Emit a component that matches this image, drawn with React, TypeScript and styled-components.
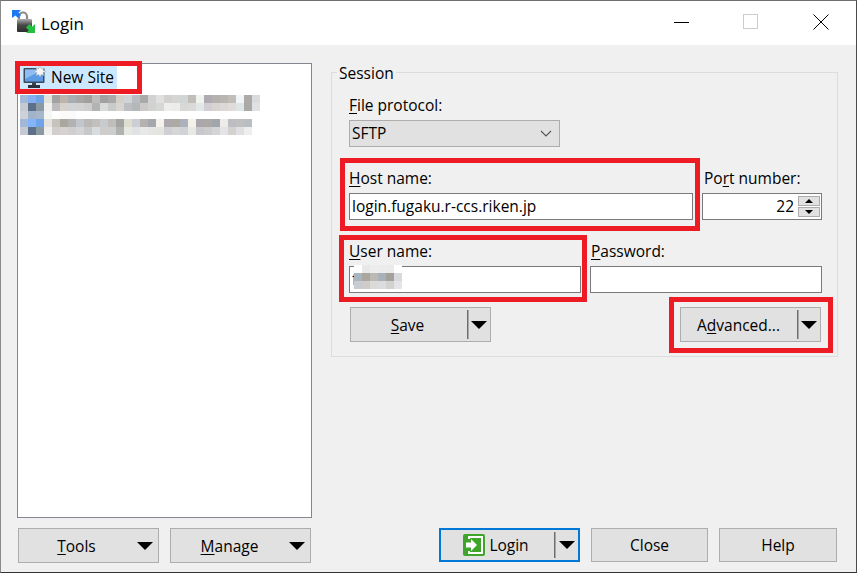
import React from "react";
import styled, { createGlobalStyle } from "styled-components";

const Global = createGlobalStyle`
  html, body { margin: 0; padding: 0; background: #f0f0f0; }
  body { font-family: "Open Sans", "Noto Sans", "Liberation Sans", sans-serif; font-size: 15.5px; color: #000; }
  * { box-sizing: border-box; }
`;

const Win = styled.div`
  position: relative;
  width: 857px;
  height: 573px;
  display: flex;
  flex-direction: column;
  background: #f0f0f0;
  overflow: hidden;
  border-top: 1px solid #6f6f6f;
  border-left: 1px solid #8a8a8a;
  border-right: 1px solid #4a4a4a;
  border-bottom: 1px solid #333;
`;
const TitleBar = styled.div`
  height: 44px;
  flex: none;
  background: #fff;
  display: flex;
  align-items: center;
  padding: 0 0 2px 11px;
`;
const Title = styled.span`
  margin: 4px 0 0 5px;
  font-size: 17px;
  line-height: 38px;
`;
const WinButtons = styled.div`
  margin-left: auto;
  display: flex;
  align-items: center;
  gap: 54px;
  padding-right: 27px;
`;
const Main = styled.div`
  flex: 1;
  display: flex;
  padding: 18px 0 9px 16px;
  gap: 19px;
`;
const LeftCol = styled.div`
  width: 295px;
  display: flex;
  flex-direction: column;
`;
const Tree = styled.div`
  height: 455px;
  background: #fff;
  border: 1px solid #828790;
  padding: 2px;
`;
const SelRow = styled.div`
  width: 97px;
  height: 24px;
  background: #cce8ff;
  display: flex;
  align-items: center;
  padding: 0 0 2px 3px;
  gap: 4px;
  line-height: 22px;
  white-space: nowrap;
`;
const TreeMosaic = styled.div`
  margin-top: 5px;
  line-height: 0;
`;
const LeftButtons = styled.div`
  display: flex;
  gap: 11px;
  margin-top: 10px;
  padding-left: 1px;
`;
const Btn = styled.div<{ $w: number; $h?: number; $focus?: boolean }>`
  position: relative;
  width: ${(p) => p.$w}px;
  height: ${(p) => p.$h ?? 35}px;
  background: #e1e1e1;
  border: ${(p) => (p.$focus ? "2px solid #0078d7" : "1px solid #adadad")};
  padding-top: 2px;
  display: flex;
  align-items: center;
  justify-content: center;
  line-height: 1;
  white-space: nowrap;
`;
const BtnLabel = styled.span<{ $pr: number }>`
  padding-right: ${(p) => p.$pr}px;
  display: flex;
  align-items: center;
  gap: 4px;
`;
const Sep = styled.i<{ $right: number }>`
  position: absolute;
  right: ${(p) => p.$right}px;
  top: 2px;
  bottom: 2px;
  border-left: 1px solid #6d6d6d;
  width: 2px;
  background: #a8a8a8;
`;
const Arrow = styled.i<{ $right: number }>`
  position: absolute;
  right: ${(p) => p.$right}px;
  top: 50%;
  margin-top: -4px;
  width: 0;
  height: 0;
  border-left: 8px solid transparent;
  border-right: 8px solid transparent;
  border-top: 8px solid #000;
`;
const RightCol = styled.div`
  width: 507px;
  display: flex;
  flex-direction: column;
`;
const Group = styled.div`
  position: relative;
  margin-top: 9px;
  height: 285px;
  border: 1px solid #dcdcdc;
  padding: 23px 0 0 17px;
`;
const Legend = styled.span`
  position: absolute;
  left: 5px;
  top: -9px;
  padding: 0 2px;
  background: #f0f0f0;
  line-height: 18px;
`;
const Row = styled.div<{ $first?: boolean }>`
  display: flex;
  gap: 9px;
  margin-top: ${(p) => (p.$first ? 0 : 22)}px;
`;
const Field = styled.div<{ $w: number }>`
  width: ${(p) => p.$w}px;
  flex: none;
`;
const Label = styled.div<{ $inset?: number }>`
  height: 24px;
  line-height: 18px;
  padding-left: ${(p) => p.$inset ?? 0}px;
  white-space: nowrap;
`;
const Input = styled.div<{ $right?: boolean }>`
  position: relative;
  height: 27px;
  background: #fff;
  border: 1px solid #7a7a7a;
  padding: 0 ${(p) => (p.$right ? "27px" : "2px")} 0 2px;
  line-height: ${(p) => (p.$right ? 25 : 24)}px;
  text-align: ${(p) => (p.$right ? "right" : "left")};
  white-space: nowrap;
`;
const Select = styled.div`
  width: 211px;
  height: 27px;
  background: #e1e1e1;
  border: 1px solid #adadad;
  padding: 0 7px 0 2px;
  line-height: 25px;
  display: flex;
  align-items: center;
  justify-content: space-between;
`;
const Spinner = styled.div`
  position: absolute;
  right: 1px;
  top: 2px;
  width: 22px;
  display: flex;
  flex-direction: column;
  gap: 1px;
`;
const SpinBtn = styled.div`
  height: 10px;
  background: #e1e1e1;
  border: 1px solid #adadad;
  display: flex;
  align-items: center;
  justify-content: center;
`;
const SpinUp = styled.i`
  width: 0; height: 0;
  border-left: 4px solid transparent;
  border-right: 4px solid transparent;
  border-bottom: 4px solid #000;
`;
const SpinDown = styled.i`
  width: 0; height: 0;
  border-left: 4px solid transparent;
  border-right: 4px solid transparent;
  border-top: 4px solid #000;
`;
const UserMosaic = styled.div`
  position: absolute;
  left: 4px;
  top: -2px;
  line-height: 0;
`;
const ButtonRow = styled.div`
  width: 473px;
  display: flex;
  justify-content: space-between;
  padding: 0 1px;
  margin-top: 14px;
`;
const Footer = styled.div`
  margin-top: auto;
  display: flex;
  justify-content: flex-end;
  gap: 11px;
  padding-right: 1px;
  margin-bottom: 1px;
`;
const Callout = styled.div<{ $x: number; $y: number; $w: number; $h: number }>`
  position: absolute;
  left: ${(p) => p.$x - 1}px;
  top: ${(p) => p.$y - 1}px;
  width: ${(p) => p.$w}px;
  height: ${(p) => p.$h}px;
  border: 5px solid #ed1c24;
  pointer-events: none;
`;
const U = styled.span`
  text-decoration: underline;
  text-underline-offset: 2px;
  text-decoration-thickness: 1px;
`;
const IconSvg = styled.svg`
  flex: none;
  display: block;
`;
const LoginSvg = styled(IconSvg)`
  margin-top: -2px;
`;

const Mosaic = ({ rows, size = 8 }: { rows: string[][]; size?: number }) => {
  const w = Math.max(...rows.map((r) => r.length)) * size;
  return (
    <IconSvg width={w} height={rows.length * size} shapeRendering="crispEdges">
      {rows.map((r, y) =>
        r.map((c, x) => <rect key={x + "-" + y} x={x * size} y={y * size} width={size} height={size} fill={c} />)
      )}
    </IconSvg>
  );
};

const treeRows = [
  "#a3b7d6 #84b0f2 #70a2e4 #e2e2dc #a2a2a2 #bdb4aa #a9adb1 #a6a6a6 #a19f9d #bcbcbc #a1a1a1 #aca9a9 #d5cfc9 #d0d4d8 #b9bdc1 #a9a9a9 #d2d2d2 #e1dfdf #d3d1cf #d5d5d3 #d1d5d5 #c1bdb9 #f1f3ef #aea9b2 #b5b1ad #b9b5b1 #c1bdb9 #f1f5f7 #aea9a9 #d9dbdd",
  "#c5cad2 #5e6f8a #8a9aa2 #f0f0ee #bcbcbe #d6d3cc #d0d4d6 #d2d2d2 #cfcdcd #b2b4b2 #d8dadc #c9cbcb #d8d4d0 #bcbfc2 #b5b8bb #ccc9c8 #d2d2d0 #d6d8d6 #eeeeec #ececea #d6d9d8 #dcdad6 #e2e6e6 #d2cfd4 #d8d4d2 #dcd8d6 #e0dcda #dfe5e5 #aba8a8 #e0e1e3",
  "#cdd2da #a2b2c8 #a8b6cc #f4f6f4 #fefefe #fbfaf8 #fafafa #ffffff #ffffff #ffffff #ffffff #ffffff #ffffff #ffffff #ffffff #ffffff #ffffff #ffffff #ffffff #ffffff #ffffff #ffffff #ffffff #ffffff #ffffff #ffffff #ffffff #ffffff #ffffff #ffffff",
  "#a3b7d6 #84b4fa #70a4ea #e6e2e0 #c6c2bc #aca6a0 #b2b2b2 #c0c6cc #bcb8b6 #c2c0bc #c8cacc #c0bebc #a4a4a2 #dedecf #ccced4 #b4b2ae #a4a8ac #f4f2ea #aca8ae #aeaaa2 #aab2bc #f4f2e8 #aaa6ac #aca8a4 #a0a6ae #eeece8 #bcbec2 #c0c0c2 #b8bec2 #ffffff",
  "#c5cad2 #5e6f8a #8a9aa2 #f0f0ee #d2cece #d6d2d0 #cfcfcf #d4d4d6 #c8c8c8 #d8dcde #cfcdcb #cdcdcd #b0b2b0 #e8e8e2 #e0e2e6 #e8e8e8 #e4e6e6 #e6e4de #ced0d4 #d6d6d8 #d0d2d6 #e8e8e4 #c8c8cc #ccccce #d4d4d6 #e4e4e6 #d4d2d0 #e0e0e2 #eeeeee #ffffff",
].map((r) => r.split(" "));

const userRows = [
  "#ffffff #e8e8e8 #ededed #ececec #ebebeb #ffffff",
  "#a8b4be #aca6a0 #bcb8b4 #a8b0b8 #a4a09c #d6dadc",
  "#c8ccd2 #cfcbc8 #dcdad6 #dadcde #d2d2d0 #e4e4e6",
].map((r) => r.split(" "));

const LockIcon = () => (
  <IconSvg width="24" height="24" viewBox="0 0 24 24">
    <defs>
      <linearGradient id="lockBody" x1="0" y1="0" x2="0" y2="1">
        <stop offset="0" stopColor="#b0b0b0" />
        <stop offset="0.45" stopColor="#4a4a4a" />
        <stop offset="1" stopColor="#2c2c2c" />
      </linearGradient>
    </defs>
    <path d="M7 10V6.5a4 4 0 0 1 8 0V10" fill="none" stroke="#8a8a8a" strokeWidth="2.2" />
    <rect x="5" y="9" width="15" height="13" rx="1" fill="url(#lockBody)" />
    <path d="M0 0h9L6.5 2.5 9 5 6 8 3.5 5.5 0 8z" fill="#1e78f0" />
    <path d="M23 23h-9l2.7-2.7L14 17.5 17.5 14l2.7 2.8L23 14z" fill="#22c040" />
  </IconSvg>
);

const MonitorIcon = () => (
  <IconSvg width="24" height="23" viewBox="0 -1 24 23">
    <rect x="0.5" y="1" width="21" height="15" rx="1" fill="#3d4a5c" />
    <rect x="2" y="2.5" width="18" height="12" fill="#5b9be6" />
    <path d="M2 2.5h18L2 12z" fill="#8dbdf2" />
    <rect x="9" y="16" width="4" height="2" fill="#39424f" />
    <rect x="5" y="18" width="12" height="3" fill="#2b323c" />
    <path d="M17 -1l1.2 2.6 2.8-1-1 2.7 2.8 1.2-2.8 1.2 1 2.7-2.8-1L17 10l-1.2-2.6-2.8 1 1-2.7-2.8-1.2 2.8-1.2-1-2.7 2.8 1z" fill="#f4f6f8" stroke="#a8b0ba" strokeWidth="0.5" />
  </IconSvg>
);

const LoginIcon = () => (
  <LoginSvg width="22" height="22" viewBox="0 0 22 22">
    <rect x="0" y="0" width="22" height="22" rx="2" fill="#3ea52a" />
    <path d="M6 5V3h13v16H6v-2" fill="none" stroke="#fff" strokeWidth="2" />
    <path d="M3 8.5h5V5l6 6-6 6v-3.5H3z" fill="#fff" />
  </LoginSvg>
);

const Chevron = () => (
  <IconSvg width="12" height="7" viewBox="0 0 12 7">
    <path d="M1 1l5 5 5-5" fill="none" stroke="#555" strokeWidth="1.1" />
  </IconSvg>
);

const Minimize = () => (
  <IconSvg width="15" height="15" viewBox="0 0 15 15"><path d="M0 7.5h15" stroke="#000" strokeWidth="1" /></IconSvg>
);
const Maximize = () => (
  <IconSvg width="16" height="16" viewBox="0 0 16 16"><rect x="0.5" y="0.5" width="14" height="14" fill="none" stroke="#ccc" /></IconSvg>
);
const CloseX = () => (
  <IconSvg width="16" height="16" viewBox="0 0 16 16"><path d="M0.5 0.5l15 15M15.5 0.5l-15 15" stroke="#000" strokeWidth="1" /></IconSvg>
);

export default function App() {
  return (
    <Win>
      <Global />
      <TitleBar>
        <LockIcon />
        <Title>Login</Title>
        <WinButtons>
          <Minimize />
          <Maximize />
          <CloseX />
        </WinButtons>
      </TitleBar>
      <Main>
        <LeftCol>
          <Tree>
            <SelRow>
              <MonitorIcon />
              New Site
            </SelRow>
            <TreeMosaic>
              <Mosaic rows={treeRows} />
            </TreeMosaic>
          </Tree>
          <LeftButtons>
            <Btn $w={141}>
              <BtnLabel $pr={24}><span><U>T</U>ools</span></BtnLabel>
              <Arrow $right={5} />
            </Btn>
            <Btn $w={141}>
              <BtnLabel $pr={22}><span><U>M</U>anage</span></BtnLabel>
              <Arrow $right={5} />
            </Btn>
          </LeftButtons>
        </LeftCol>
        <RightCol>
          <Group>
            <Legend>Session</Legend>
            <Row $first>
              <Field $w={211}>
                <Label><U>F</U>ile protocol:</Label>
                <Select>SFTP<Chevron /></Select>
              </Field>
            </Row>
            <Row>
              <Field $w={344}>
                <Label><U>H</U>ost name:</Label>
                <Input>login.fugaku.r-ccs.riken.jp</Input>
              </Field>
              <Field $w={120}>
                <Label $inset={2}>Po<U>r</U>t number:</Label>
                <Input $right>
                  22
                  <Spinner>
                    <SpinBtn><SpinUp /></SpinBtn>
                    <SpinBtn><SpinDown /></SpinBtn>
                  </Spinner>
                </Input>
              </Field>
            </Row>
            <Row>
              <Field $w={232}>
                <Label><U>U</U>ser name:</Label>
                <Input>
                  f
                  <UserMosaic><Mosaic rows={userRows} /></UserMosaic>
                </Input>
              </Field>
              <Field $w={232}>
                <Label $inset={1}><U>P</U>assword:</Label>
                <Input />
              </Field>
            </Row>
            <ButtonRow>
              <Btn $w={141}>
                <BtnLabel $pr={26}><span><U>S</U>ave</span></BtnLabel>
                <Sep $right={21} />
                <Arrow $right={3} />
              </Btn>
              <Btn $w={141}>
                <BtnLabel $pr={24}><span>A<U>d</U>vanced...</span></BtnLabel>
                <Sep $right={21} />
                <Arrow $right={3} />
              </Btn>
            </ButtonRow>
          </Group>
          <Footer>
            <Btn $w={141} $h={34} $focus>
              <BtnLabel $pr={27}><LoginIcon /><span>Login</span></BtnLabel>
              <Sep $right={22} />
              <Arrow $right={3} />
            </Btn>
            <Btn $w={117} $h={34}>Close</Btn>
            <Btn $w={118} $h={34}>Help</Btn>
          </Footer>
        </RightCol>
      </Main>
      <Callout $x={15} $y={61} $w={127} $h={33} />
      <Callout $x={340} $y={158} $w={360} $h={73} />
      <Callout $x={339} $y={235} $w={248} $h={67} />
      <Callout $x={669} $y={297} $w={164} $h={56} />
    </Win>
  );
}
